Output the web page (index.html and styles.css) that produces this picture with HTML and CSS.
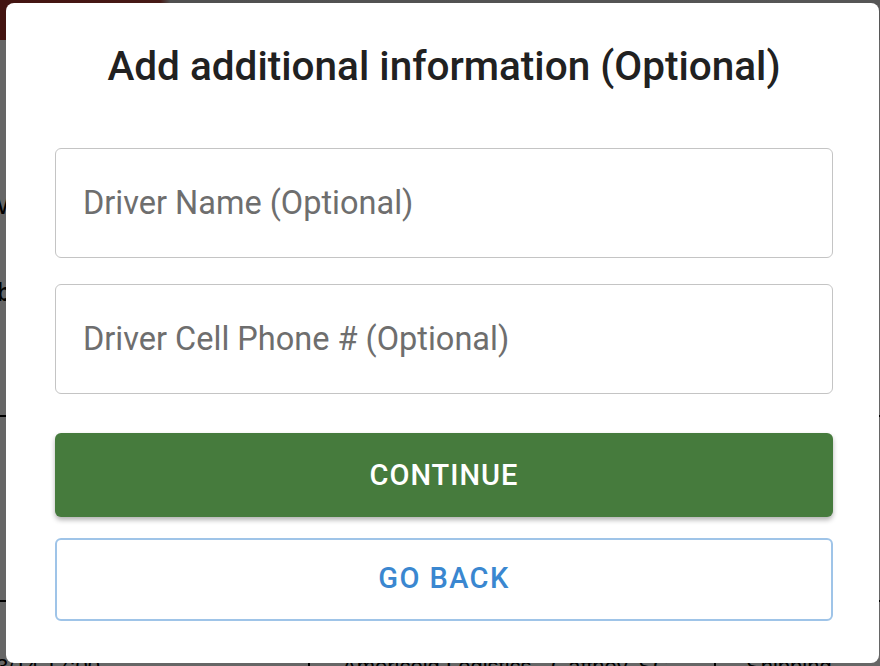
FILE: index.html
```html
<!DOCTYPE html>
<html lang="en">
<head>
<meta charset="utf-8">
<title>Add additional information</title>
<link rel="stylesheet" href="styles.css">
</head>
<body>
<div class="page">
  <div class="hero"></div>
  <div class="page-body">
    <p class="line-w">Welcome</p>
    <p class="line-b">bold</p>
    <div class="rule rule-1"></div>
    <div class="rule rule-2"></div>
    <div class="table-row">
      <span class="cell c1">3/14 17:00</span>
      <span class="cell c2">Americold Logistics - Gaffney, SC</span>
      <span class="cell c3">Shipping</span>
    </div>
  </div>
</div>
<div class="overlay">
  <div class="modal">
    <h1 class="modal-title">Add additional information (Optional)</h1>
    <input class="field" type="text" placeholder="Driver Name (Optional)">
    <input class="field" type="tel" placeholder="Driver Cell Phone # (Optional)">
    <button class="btn btn-primary" type="button">CONTINUE</button>
    <button class="btn btn-outline" type="button">GO BACK</button>
  </div>
</div>
</body>
</html>
```

FILE: styles.css
```css
html, body {
  margin: 0;
  padding: 0;
  height: 100%;
  overflow: hidden;
}
body {
  background: #ffffff;
  font-family: "Liberation Sans", Arial, sans-serif;
}
.page {
  width: 880px;
}
.hero {
  height: 40px;
  background: linear-gradient(90deg, #a8322a 0px, #b04038 160px, #c8c8c8 170px, #d8d8d8 880px);
}
.page-body {
  padding-top: 150px;
  margin-left: -4px;
}
.line-w {
  margin: 0;
  font-size: 26px;
  color: #000;
}
.line-b {
  margin: 56px 0 0;
  font-size: 26px;
  font-weight: bold;
  color: #000;
}
.rule {
  height: 2px;
  background: #000;
}
.rule-1 { margin-top: 107px; }
.rule-2 { margin-top: 183px; }
.table-row {
  display: flex;
  margin-top: 52px;
  font-size: 22px;
  color: #000;
}
.cell { display: block; }
.c1 { width: 312px; border-right: 2px solid #000; }
.c2 { width: 372px; padding-left: 32px; border-right: 2px solid #000; }
.c3 { padding-left: 30px; }

.overlay {
  position: fixed;
  inset: 0;
  background: rgba(0, 0, 0, 0.6);
  display: flex;
  align-items: flex-start;
  padding: 3px 0 0 6px;
}
.modal {
  box-sizing: border-box;
  width: 873px;
  height: 660px;
  background: #ffffff;
  border-radius: 8px;
  padding: 0 46px 0 49px;
  display: flex;
  flex-direction: column;
  font-family: Roboto, "Liberation Sans", Arial, sans-serif;
}
.modal-title {
  margin: 39px 0 0;
  text-align: center;
  font-size: 40.5px;
  line-height: 48px;
  font-weight: 500;
  color: #212121;
}
.field {
  box-sizing: border-box;
  width: 100%;
  height: 110px;
  margin: 58px 0 0;
  padding: 0 0 0 27px;
  border: 1px solid #c4c4c4;
  border-radius: 6px;
  font-family: Roboto, "Liberation Sans", Arial, sans-serif;
  font-size: 32.5px;
  color: #333;
  background: #fff;
  outline: none;
}
.field + .field {
  margin-top: 26px;
}
.field::placeholder {
  color: #6e6e6e;
  opacity: 1;
}
.btn {
  box-sizing: border-box;
  width: 100%;
  border-radius: 6px;
  font-family: Roboto, "Liberation Sans", Arial, sans-serif;
  font-weight: 500;
  cursor: pointer;
}
.btn-primary {
  height: 84px;
  margin-top: 39px;
  padding-bottom: 2px;
  border: none;
  background: #467b3d;
  color: #ffffff;
  font-size: 29px;
  letter-spacing: 1px;
  box-shadow: 0 3px 5px rgba(0, 0, 0, 0.3);
}
.btn-outline {
  height: 83px;
  margin-top: 21px;
  padding-bottom: 4px;
  border: 2px solid #9fc4e8;
  background: #ffffff;
  color: #3a87d0;
  font-size: 29px;
  letter-spacing: 1.4px;
}
```
